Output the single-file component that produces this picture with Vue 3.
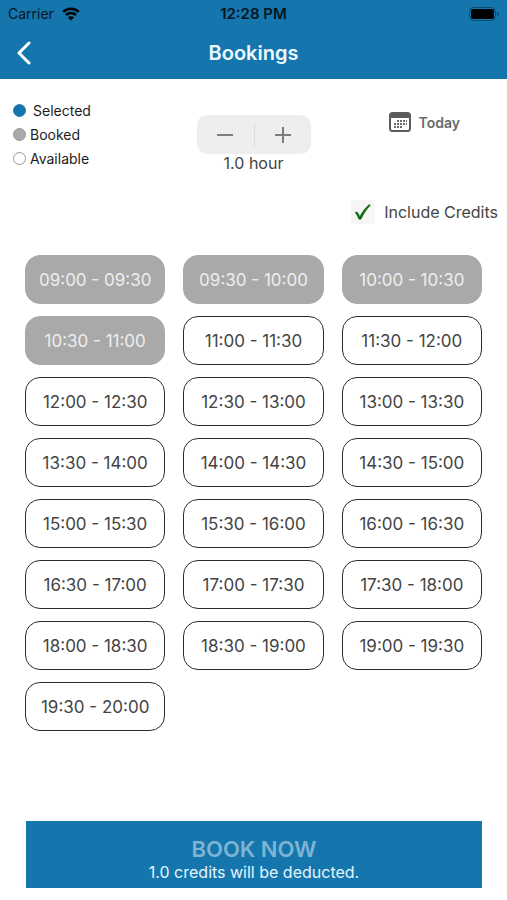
<script setup>
import { ref, computed } from 'vue'

const times = []
for (let m = 540; m <= 1200; m += 30) {
  times.push(`${String(Math.floor(m / 60)).padStart(2, '0')}:${m % 60 ? '30' : '00'}`)
}
const slots = ref(
  times.slice(0, -1).map((start, i) => ({
    label: `${start} - ${times[i + 1]}`,
    booked: i < 4,
    selected: false
  }))
)

const hours = ref(1)
const includeCredits = ref(true)
const duration = computed(() => hours.value.toFixed(1))
const canBook = computed(() => slots.value.some((s) => s.selected))

function step(delta) {
  hours.value = Math.max(0.5, hours.value + delta)
}
</script>

<template>
  <div class="screen">
    <header class="top">
      <div class="status">
        <div class="carrier">
          <span>Carrier</span>
          <svg class="wifi" viewBox="0 0 18 14" aria-hidden="true">
            <path d="M1.2 4.9a11.2 11.2 0 0 1 15.6 0" />
            <path d="M4 8a7.2 7.2 0 0 1 10 0" />
            <path class="solid" d="M9 13.6 5.9 10.5a4.4 4.4 0 0 1 6.2 0z" />
          </svg>
        </div>
        <div class="clock">12:28 PM</div>
        <svg class="battery" viewBox="0 0 30 14" aria-hidden="true">
          <rect class="shell" x="0.5" y="0.5" width="26" height="13" rx="4" />
          <rect x="2" y="2" width="23" height="10" rx="2" />
          <path class="tip" d="M28 5v4c2-.6 2-3.4 0-4z" />
        </svg>
      </div>
      <nav class="nav">
        <button class="back" type="button" aria-label="Back">
          <svg viewBox="0 0 16 24" aria-hidden="true"><path d="M13 2 3 12l10 10" /></svg>
        </button>
        <h1>Bookings</h1>
      </nav>
    </header>

    <main>
      <section class="controls">
        <ul class="legend">
          <li class="wide"><i class="dot selected"></i>Selected</li>
          <li><i class="dot booked"></i>Booked</li>
          <li><i class="dot"></i>Available</li>
        </ul>
        <div class="duration">
          <div class="stepper">
            <button type="button" aria-label="Decrease duration" @click="step(-0.5)">
              <svg viewBox="0 0 18 18" aria-hidden="true"><path d="M1 9h16" /></svg>
            </button>
            <button type="button" aria-label="Increase duration" @click="step(0.5)">
              <svg viewBox="0 0 18 18" aria-hidden="true"><path d="M1 9h16M9 1v16" /></svg>
            </button>
          </div>
          <output>{{ duration }} hour</output>
        </div>
        <button class="date" type="button">
          <svg viewBox="0 0 22 20" aria-hidden="true">
            <rect class="frame" x="1" y="1" width="20" height="18" rx="2.5" />
            <path class="head" d="M1 3.5A2.5 2.5 0 0 1 3.5 1h15A2.5 2.5 0 0 1 21 3.5V6H1z" />
            <path class="days" d="M8 9h10M5 12h13M5 15h9" />
          </svg>
          Today
        </button>
      </section>

      <label class="credits">
        <input v-model="includeCredits" type="checkbox" />
        <span class="box">
          <svg v-if="includeCredits" viewBox="0 0 24 24" aria-hidden="true">
            <path d="M4.2 12.5c1-.9 2-.7 2.6.3l2 3.6C11.5 11.5 14.5 7.5 18.2 4.5l1.3.6C15.500 9.300 12.500 14 10 19.200H7.800C7 16.800 5.800 14.500 4.200 12.500z" />
          </svg>
        </span>
        Include Credits
      </label>

      <section class="slots" aria-label="Time slots">
        <button
          v-for="slot in slots"
          :key="slot.label"
          type="button"
          class="slot"
          :class="{ booked: slot.booked, selected: slot.selected }"
          :disabled="slot.booked"
          @click="slot.selected = !slot.selected"
        >
          {{ slot.label }}
        </button>
      </section>
    </main>

    <button class="book" :class="{ ready: canBook }" type="button">
      <strong>BOOK NOW</strong>
      <span>{{ duration }} credits will be deducted.</span>
    </button>
  </div>
</template>

<style>
body {
  margin: 0;
  background: #fff;
}
</style>

<style scoped>
.screen {
  display: flex;
  flex-direction: column;
  min-height: 100vh;
  box-sizing: border-box;
  padding-bottom: 12px;
  font-family: Inter, "Liberation Sans", sans-serif;
  color: #444;
}
button {
  font: inherit;
  color: inherit;
  margin: 0;
  padding: 0;
  border: 0;
  background: none;
}
svg {
  display: block;
  fill: none;
}
.top {
  background: #1476ac;
}
.status {
  display: grid;
  grid-template-columns: 1fr auto 1fr;
  align-items: center;
  height: 27px;
  padding: 0 8px;
  font-size: 14px;
  color: #06151f;
}
.carrier {
  display: flex;
  align-items: center;
  gap: 8px;
}
.wifi {
  width: 18px;
  height: 14px;
  stroke: #000;
  stroke-width: 2.6;
}
.wifi .solid {
  fill: #000;
  stroke: none;
}
.clock {
  font-size: 15px;
  font-weight: 600;
}
.battery {
  width: 30px;
  height: 14px;
  justify-self: end;
  fill: #000;
}
.battery .shell {
  fill: none;
  stroke: #0d4c6f;
}
.battery .tip {
  fill: #0d4c6f;
}
.nav {
  display: grid;
  grid-template-columns: 1fr auto 1fr;
  align-items: center;
  height: 52px;
  padding: 0 16px;
  box-sizing: border-box;
}
.back {
  width: 16px;
  height: 24px;
}
.back svg {
  width: 16px;
  height: 24px;
  stroke: #fff;
  stroke-width: 3;
  stroke-linecap: round;
  stroke-linejoin: round;
}
h1 {
  margin: 0;
  font-size: 20px;
  font-weight: 600;
  color: #eef9ff;
}
.controls {
  display: grid;
  grid-template-columns: 1fr auto 1fr;
  align-items: start;
  padding: 19px 13px 0;
}
.legend {
  list-style: none;
  margin: 0;
  padding: 0;
  font-size: 14px;
  color: #1c1c1c;
}
.legend li {
  display: flex;
  align-items: center;
  gap: 4px;
  height: 24px;
}
.legend .wide {
  gap: 7px;
}
.dot {
  width: 13px;
  height: 13px;
  box-sizing: border-box;
  border: 1px solid #999;
  border-radius: 50%;
}
.dot.selected {
  background: #1476ac;
  border-color: #2f7ba6;
}
.dot.booked {
  background: #a9a9a9;
}
.duration {
  display: flex;
  flex-direction: column;
  align-items: center;
  padding-top: 17px;
}
.stepper {
  display: flex;
  align-items: center;
  height: 39px;
  border-radius: 10px;
  background: #eee;
}
.stepper button {
  display: grid;
  place-items: center;
  width: 57px;
  height: 24px;
}
.stepper button + button {
  box-sizing: border-box;
  border-left: 1px solid #dcdcdc;
}
.stepper svg {
  width: 18px;
  height: 18px;
  stroke: #7d7d7d;
  stroke-width: 2;
}
output {
  font-size: 16px;
  line-height: 18px;
}
.date {
  display: flex;
  align-items: center;
  justify-self: center;
  gap: 8px;
  height: 48px;
  padding-left: 44px;
  font-size: 14px;
  font-weight: 600;
  color: #6a6a6a;
}
.date svg {
  width: 22px;
  height: 20px;
}
.date .frame {
  stroke: #5c5c5c;
  stroke-width: 2;
}
.date .head {
  fill: #5c5c5c;
}
.date .days {
  stroke: #6a6a6a;
  stroke-width: 2;
  stroke-dasharray: 2 1;
}
.credits {
  display: flex;
  align-items: center;
  justify-content: flex-end;
  gap: 9px;
  height: 24px;
  margin-top: 28px;
  padding-right: 9px;
  font-size: 16px;
}
.credits input {
  position: absolute;
  opacity: 0;
}
.box {
  width: 24px;
  height: 24px;
  background: #f6f6f6;
}
.box svg {
  fill: #086a10;
  stroke: #086a10;
  stroke-width: 0.5;
}
.slots {
  display: grid;
  grid-template-columns: repeat(3, 1fr);
  gap: 12px 18px;
  padding: 31px 25px;
}
.slot {
  height: 49px;
  border: 1px solid #2c2c2c;
  border-radius: 15px;
  font-size: 17px;
}
.slot.booked {
  border-color: #a9a9a9;
  background: #a9a9a9;
  color: #eee;
}
.slot.selected {
  border-color: #1476ac;
  background: #1476ac;
  color: #fff;
}
.book {
  display: flex;
  flex-direction: column;
  align-items: center;
  margin: auto 25px 0 26px;
  padding: 16px 0 5px;
  background: #1476ac;
  color: #e4f5ff;
  font-size: 16px;
  line-height: 22px;
}
.book strong {
  font-size: 22px;
  font-weight: 600;
  line-height: 24px;
  color: #7db4d3;
}
.book.ready strong {
  color: #fff;
}
</style>
